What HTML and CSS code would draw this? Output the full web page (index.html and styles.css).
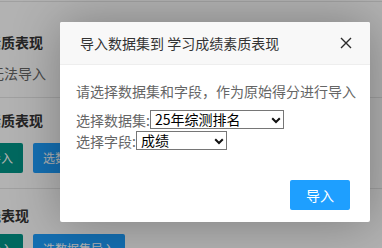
FILE: index.html
```html
<!DOCTYPE html>
<html lang="zh-CN">
<head>
<meta charset="utf-8">
<title>导入数据集</title>
<link rel="stylesheet" href="styles.css">
</head>
<body>
<div class="page">
  <div class="topbar"></div>
  <div class="content">
    <section class="sec sec1">
      <h3 class="sec-title">学习成绩素质表现</h3>
      <p class="sec-text">该数据尚无法导入</p>
    </section>
    <section class="sec sec2">
      <h3 class="sec-title">思想品德素质表现</h3>
      <div class="btns">
        <span class="btn teal">本地文件导入</span>
        <span class="btn blue">选数据集导入</span>
      </div>
    </section>
    <section class="sec sec3">
      <h3 class="sec-title">劳动与实践表现</h3>
      <div class="btns">
        <span class="btn teal">本地文件导入</span>
        <span class="btn blue">选数据集导入</span>
      </div>
    </section>
  </div>
</div>

<div class="shade"></div>

<div class="layer">
  <div class="layer-title">
    <span class="title-text">导入数据集到 学习成绩素质表现</span>
    <span class="close">
      <svg width="12" height="12" viewBox="0 0 12 12"><path d="M1 1 L11 11 M11 1 L1 11" stroke="#2b2b2b" stroke-width="1.4" fill="none"/></svg>
    </span>
  </div>
  <div class="layer-body">
    <p class="hint">请选择数据集和字段，作为原始得分进行导入</p>
    <div class="row">
      <label class="lbl">选择数据集:</label><span class="sel-wrap sel1"><select class="sel"><option>25年综测排名</option></select><svg class="chev" width="10" height="7" viewBox="0 0 10 7"><path d="M1.2 1.2 L5 5 L8.8 1.2" stroke="#111" stroke-width="2" fill="none"/></svg></span>
    </div>
    <div class="row">
      <label class="lbl">选择字段:</label><span class="sel-wrap sel2"><select class="sel"><option>成绩</option></select><svg class="chev" width="10" height="7" viewBox="0 0 10 7"><path d="M1.2 1.2 L5 5 L8.8 1.2" stroke="#111" stroke-width="2" fill="none"/></svg></span>
    </div>
  </div>
  <div class="layer-btns">
    <a class="ok-btn">导入</a>
  </div>
</div>
</body>
</html>
```
FILE: styles.css
```css
html, body {
  margin: 0;
  padding: 0;
}
body {
  width: 382px;
  height: 248px;
  overflow: hidden;
  background: #fff;
  font-family: "Noto Sans CJK SC", "Noto Sans", sans-serif;
  position: relative;
}
.page {
  width: 382px;
  height: 248px;
  overflow: hidden;
}
.topbar {
  height: 1px;
  border-bottom: 1px solid #e6e6e6;
}
.content {
  margin-left: -69px;
}
.sec {
  border-bottom: 1px solid #e6e6e6;
}
.sec-title {
  margin: 0;
  font-size: 14px;
  line-height: 20px;
  font-weight: bold;
  color: #333;
  white-space: nowrap;
}
.sec-text {
  margin: 11px 0 0 3px;
  font-size: 14px;
  line-height: 20px;
  color: #666;
  white-space: nowrap;
}
.sec1 { padding: 30px 0 14px; }
.sec2 { padding: 12px 0 15px; }
.sec3 { padding: 16px 0 0; border-bottom: none; }
.sec2 .btns { margin-top: 13px; }
.sec3 .btns { margin-top: 9px; }
.btns {
  display: flex;
  gap: 10px;
}
.btn {
  height: 30px;
  line-height: 30px;
  padding: 0 10px;
  font-size: 12px;
  color: #fff;
  border-radius: 2px;
  white-space: nowrap;
}
.teal { background: #009688; }
.blue { background: #1e9fff; }

.shade {
  position: absolute;
  inset: 0;
  background: rgba(0, 0, 0, 0.3);
}

.layer {
  position: absolute;
  left: 60px;
  top: 22px;
  width: 310px;
  height: 200px;
  background: #fff;
  border-radius: 2px;
  box-shadow: 1px 1px 50px rgba(0, 0, 0, 0.3);
  display: flex;
  flex-direction: column;
}
.layer-title {
  height: 42px;
  border-bottom: 1px solid #eee;
  background: #f8f8f8;
  display: flex;
  align-items: center;
  justify-content: space-between;
  padding: 0 18px 0 20px;
  border-radius: 2px 2px 0 0;
}
.title-text {
  font-size: 14px;
  color: #333;
  white-space: nowrap;
}
.close {
  display: flex;
  width: 12px;
  height: 12px;
}
.layer-body {
  flex: 1;
  padding: 16px 10px 0 16px;
  color: #666;
  font-size: 14px;
}
.hint {
  margin: 0 0 8px;
  line-height: 20px;
  white-space: nowrap;
}
.row {
  display: flex;
  align-items: center;
  height: 21px;
}
.lbl {
  line-height: 20px;
  white-space: nowrap;
}
.sel-wrap {
  position: relative;
  display: flex;
  height: 19px;
}
.sel {
  appearance: none;
  -webkit-appearance: none;
  width: 100%;
  height: 19px;
  box-sizing: border-box;
  font-family: "Noto Sans CJK SC", sans-serif;
  font-size: 14px;
  line-height: 17px;
  color: #000;
  border: 1px solid #767676;
  border-radius: 0;
  background: #fff;
  padding: 0 14px 0 4px;
  margin: 0;
}
.chev {
  position: absolute;
  right: 3px;
  top: 7px;
  pointer-events: none;
}
.sel1 { width: 134px; }
.sel2 { width: 91px; }
.layer-btns {
  display: flex;
  justify-content: flex-end;
  padding: 0 20px 12px;
}
.ok-btn {
  height: 30px;
  line-height: 30px;
  padding: 0 16px;
  background: #1e9fff;
  color: #fff;
  font-size: 14px;
  border-radius: 2px;
}
```
